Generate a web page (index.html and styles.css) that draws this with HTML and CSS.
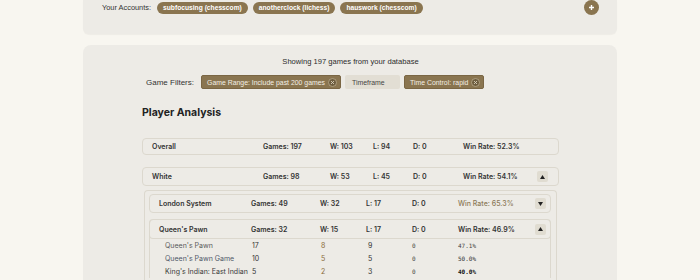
FILE: index.html
```html
<!DOCTYPE html>
<html lang="en">

<head>
  <meta charset="UTF-8" />
  <meta name="viewport" content="width=device-width, initial-scale=1.0" />
  <title>Player Analysis</title>
  <link rel="stylesheet" href="styles.css">
</head>

<body>
  <div class="accounts">
    <span class="accounts-label">Your Accounts:</span>
    <span class="account-pill">subfocusing (chesscom)</span>
    <span class="account-pill">anotherclock (lichess)</span>
    <span class="account-pill">hauswork (chesscom)</span>
    <button class="add-account">
      <svg width="7" height="7" viewBox="0 0 7 7"><path d="M3.5 1v5M1 3.5h5" stroke="#fff" stroke-width="1.4" /></svg>
    </button>
  </div>

  <div class="main">
    <p class="showing">Showing 197 games from your database</p>

    <div class="filters">
      <span class="filters-label">Game Filters:</span>
      <span class="filter active">Game Range: Include past 200 games
        <svg class="remove" width="9" height="9" viewBox="0 0 9 9"><circle cx="4.5" cy="4.5" r="4" fill="#6f5e40" stroke="#b9ab8c" stroke-width="0.8" /><path d="M3 3l3 3M6 3l-3 3" stroke="#d8cfbb" stroke-width="0.9" /></svg>
      </span>
      <span class="filter">Timeframe</span>
      <span class="filter active">Time Control: rapid
        <svg class="remove" width="9" height="9" viewBox="0 0 9 9"><circle cx="4.5" cy="4.5" r="4" fill="#6f5e40" stroke="#b9ab8c" stroke-width="0.8" /><path d="M3 3l3 3M6 3l-3 3" stroke="#d8cfbb" stroke-width="0.9" /></svg>
      </span>
    </div>

    <h2>Player Analysis</h2>

    <div class="row top overall">
      <span>Overall</span>
      <span>Games: 197</span>
      <span>W: 103</span>
      <span>L: 94</span>
      <span>D: 0</span>
      <span>Win Rate: 52.3%</span>
    </div>

    <div class="row top white">
      <span>White</span>
      <span>Games: 98</span>
      <span>W: 53</span>
      <span>L: 45</span>
      <span>D: 0</span>
      <span>Win Rate: 54.1%</span>
      <button class="toggle"><svg width="5" height="4" viewBox="0 0 5 4"><path d="M2.5 0L5 4H0z" fill="#222" /></svg></button>
    </div>

    <div class="children">
      <div class="row sub">
        <span>London System</span>
        <span>Games: 49</span>
        <span>W: 32</span>
        <span>L: 17</span>
        <span>D: 0</span>
        <span class="rate-good">Win Rate: 65.3%</span>
        <button class="toggle"><svg width="5" height="4" viewBox="0 0 5 4"><path d="M0 0H5L2.5 4z" fill="#222" /></svg></button>
      </div>

      <div class="group">
        <div class="row sub">
          <span>Queen's Pawn</span>
          <span>Games: 32</span>
          <span>W: 15</span>
          <span>L: 17</span>
          <span>D: 0</span>
          <span>Win Rate: 46.9%</span>
          <button class="toggle"><svg width="5" height="4" viewBox="0 0 5 4"><path d="M2.5 0L5 4H0z" fill="#222" /></svg></button>
        </div>
        <div class="line">
          <span class="name">Queen's Pawn</span>
          <span>17</span>
          <span class="wins">8</span>
          <span>9</span>
          <span class="mono">0</span>
          <span class="mono">47.1%</span>
        </div>
        <div class="line">
          <span class="name link">Queen's Pawn Game</span>
          <span>10</span>
          <span class="wins">5</span>
          <span>5</span>
          <span class="mono">0</span>
          <span class="mono dark">50.0%</span>
        </div>
        <div class="line">
          <span class="name dark">King's Indian: East Indian</span>
          <span>5</span>
          <span class="wins">2</span>
          <span>3</span>
          <span class="mono">0</span>
          <span class="mono strong">40.0%</span>
        </div>
      </div>
    </div>
  </div>
</body>
</html>
```

FILE: styles.css
```css
* {
  box-sizing: border-box;
}

body {
  margin: 0;
  background-color: #f8f6f0;
  color: #333;
  font-family: 'Inter', sans-serif;
  overflow: hidden;
}

button {
  border: none;
  padding: 0;
  cursor: pointer;
}

.accounts {
  width: 534px;
  margin: 0 auto;
  padding: 0 18px 19px 19px;
  display: flex;
  align-items: center;
  gap: 5px;
  background-color: #edebe6;
  border-radius: 0 0 6px 6px;
  box-shadow: 0 1px 1px rgba(0, 0, 0, 0.04);
}

.accounts-label {
  font-family: 'Liberation Sans', Arial, sans-serif;
  font-size: 7.4px;
  color: #333;
  margin-right: 1px;
  line-height: 14px;
}

.account-pill {
  height: 12px;
  line-height: 12px;
  padding: 0 6px;
  border-radius: 6px;
  background-color: #8a7550;
  color: #fff;
  font-family: 'Liberation Sans', Arial, sans-serif;
  font-size: 6.7px;
  font-weight: 700;
}

.add-account {
  margin-left: auto;
  width: 15px;
  height: 15px;
  border-radius: 50%;
  background-color: #8a7550;
  display: flex;
  align-items: center;
  justify-content: center;
}

.main {
  width: 534px;
  height: 260px;
  margin: 11px auto 0;
  padding: 12px 58px 0 59px;
  background-color: #edebe6;
  border-radius: 8px;
}

.showing {
  margin: 0;
  text-align: center;
  font-family: 'Liberation Sans', Arial, sans-serif;
  font-size: 7.6px;
  line-height: 10px;
  color: #2c2c2c;
}

.filters {
  display: flex;
  align-items: center;
  gap: 4px;
  margin-top: 8px;
  padding-left: 4px;
  font-family: 'Liberation Sans', Arial, sans-serif;
}

.filters-label {
  font-size: 8px;
  color: #333;
  margin-right: 3px;
}

.filter {
  height: 14px;
  padding: 0 5px;
  display: flex;
  align-items: center;
  gap: 3px;
  border-radius: 2px;
  background-color: #e2ded4;
  color: #444;
  font-size: 6.9px;
}

.filter.active {
  background-color: #8a7550;
  color: #f3efe6;
  padding-right: 3px;
  border: 1px solid #7a6644;
}

.filter:not(.active) {
  width: 55px;
  padding-left: 7px;
}

h2 {
  margin: 17px 0 0;
  font-size: 10.5px;
  line-height: 14px;
  font-weight: 700;
  color: #222;
}

.row {
  display: grid;
  align-items: center;
  border: 1px solid #dcd8ce;
  border-radius: 4px;
  font-size: 7px;
  font-weight: 600;
  color: #333;
}

.row.top {
  grid-template-columns: 111px 67px 43px 40px 50px 74px 11px;
  padding: 0 9px;
}

.overall {
  height: 17px;
  margin-top: 18px;
}

.white {
  height: 19px;
  margin-top: 12px;
}

.toggle {
  width: 11px;
  height: 11px;
  border-radius: 2px;
  background-color: #e0dcd1;
  display: flex;
  align-items: center;
  justify-content: center;
}

.children {
  margin: 4px 2px 0;
  padding: 3px 5px 0 4px;
  border: 1px solid #dcd8ce;
  border-bottom: none;
  border-radius: 4px 4px 0 0;
  height: 100px;
}

.row.sub {
  grid-template-columns: 92px 69px 46px 46px 46px 77px 11px;
  padding: 0 9px;
}

.children > .row.sub {
  height: 19px;
}

.rate-good {
  color: #8c7a58;
  font-weight: 500;
}

.group {
  margin-top: 6px;
  border: 1px solid #dcd8ce;
  border-bottom: none;
  border-radius: 4px 4px 0 0;
}

.group .row.sub {
  height: 19px;
  border: none;
  border-bottom: 1px solid #dcd8ce;
  border-radius: 4px;
  margin: 0 -1px;
  border-left: 1px solid #dcd8ce;
  border-right: 1px solid #dcd8ce;
}

.line {
  display: grid;
  grid-template-columns: 87px 69px 47px 44px 46px 60px;
  padding-left: 15px;
  height: 13px;
  align-items: center;
  font-size: 7px;
  color: #333;
}

.name {
  color: #5a5a5a;
}

.name.link {
  color: #4f5868;
}

.name.dark {
  color: #3a3a3a;
}

.wins {
  color: #8a6a38;
}

.mono {
  font-family: 'DejaVu Sans Mono', monospace;
  font-size: 6px;
  color: #444;
}

.mono.dark {
  color: #333;
}

.mono.strong {
  color: #111;
  font-weight: 700;
}
```
